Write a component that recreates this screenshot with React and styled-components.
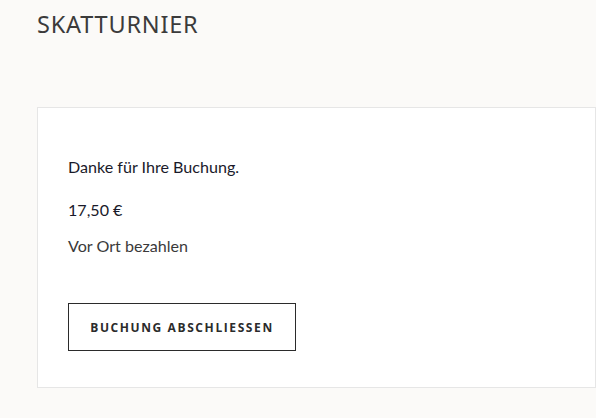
import React from 'react';
import styled, { createGlobalStyle } from 'styled-components';

const GlobalStyle = createGlobalStyle`
  html, body {
    margin: 0;
    padding: 0;
    background: #fbfaf8;
  }
  body {
    font-family: 'Lato', 'Noto Sans', sans-serif;
    color: #222;
  }
`;

const Page = styled.div`
  padding: 8px 0 0 37px;
  width: 559px;
`;

const Title = styled.h1`
  margin: 0;
  font-family: 'Noto Sans', 'Open Sans', sans-serif;
  font-weight: 400;
  font-size: 23.5px;
  line-height: 32px;
  letter-spacing: 0.8px;
  color: #3b3b3b;
`;

const Card = styled.section`
  margin-top: 67px;
  background: #fff;
  border: 1px solid #e6e6e6;
  padding: 47px 30px 36px;
  display: flex;
  flex-direction: column;
  align-items: flex-start;
`;

const Line = styled.p`
  margin: 0 0 ${({ gap }) => gap}px;
  font-size: 16.1px;
  line-height: 24px;
  color: ${({ muted }) => (muted ? '#3a3a3a' : '#1a1a2a')};
`;

const Button = styled.button`
  margin-top: 45px;
  width: 228px;
  height: 48px;
  background: #fff;
  border: 1px solid #2b2b2b;
  font-family: 'Open Sans', 'Noto Sans', sans-serif;
  font-weight: 700;
  font-size: 12px;
  letter-spacing: 1.6px;
  color: #2b2b2b;
  cursor: pointer;
`;

export default function App() {
  return (
    <>
      <GlobalStyle />
      <Page>
        <Title>SKATTURNIER</Title>
        <Card>
          <Line gap={19}>Danke für Ihre Buchung.</Line>
          <Line gap={12}>17,50 €</Line>
          <Line muted gap={0}>Vor Ort bezahlen</Line>
          <Button>BUCHUNG ABSCHLIESSEN</Button>
        </Card>
      </Page>
    </>
  );
}
